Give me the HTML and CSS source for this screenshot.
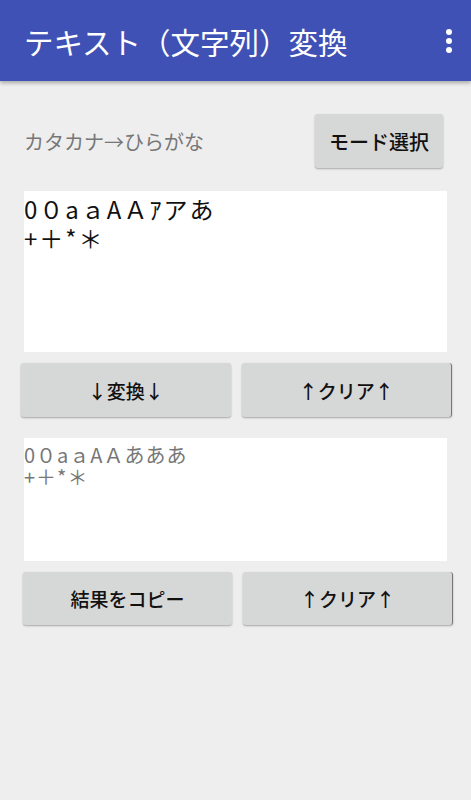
FILE: index.html
```html
<!DOCTYPE html>
<html lang="ja">
<head>
  <meta charset="UTF-8" />
  <meta name="viewport" content="width=device-width, initial-scale=1.0"/>
  <title>テキスト（文字列）変換</title>
  <link rel="stylesheet" href="styles.css">
</head>
<body>
  <header class="appbar">
    <h1>テキスト（文字列）変換</h1>
    <button class="menu-btn" aria-label="メニュー">
      <svg width="8" height="26" viewBox="0 0 8 26">
        <circle cx="4" cy="4" r="3" fill="#fff"/>
        <circle cx="4" cy="13" r="3" fill="#fff"/>
        <circle cx="4" cy="22" r="3" fill="#fff"/>
      </svg>
    </button>
  </header>

  <main class="content">
    <div class="mode-row">
      <span class="mode-label">カタカナ→ひらがな</span>
      <button class="btn btn-mode">モード選択</button>
    </div>

    <textarea class="textbox input-box" id="inputText">0０aａAＡｱアあ
+＋*＊</textarea>

    <div class="btn-row first">
      <button class="btn">↓変換↓</button>
      <button class="btn btn-edge">↑クリア↑</button>
    </div>

    <div class="textbox output-box" id="outputText">0０aａAＡあああ
+＋*＊</div>

    <div class="btn-row second">
      <button class="btn">結果をコピー</button>
      <button class="btn btn-edge">↑クリア↑</button>
    </div>
  </main>
</body>
</html>
```

FILE: styles.css
```css
body {
  font-family: "Noto Sans CJK JP", "Noto Sans", sans-serif;
  margin: 0;
  padding: 0;
  background-color: #eeeeee;
  color: #000;
  min-height: 800px;
}

.appbar {
  height: 81px;
  background-color: #3f51b5;
  color: #fff;
  display: flex;
  align-items: center;
  justify-content: space-between;
  padding: 0 24px;
  box-shadow: 0 2px 4px rgba(0,0,0,0.3);
}

.appbar h1 {
  margin: 0;
  font-size: 29.5px;
  font-weight: normal;
}

.menu-btn {
  background: none;
  border: none;
  padding: 0;
  margin-right: -6px;
  display: flex;
}

.content {
  padding: 33px 24px 0;
}

.mode-row {
  display: flex;
  align-items: center;
  justify-content: space-between;
  padding-right: 4px;
}

.mode-label {
  font-size: 20px;
  color: #777;
}

.btn {
  font-family: "Noto Sans CJK JP", "Noto Sans", sans-serif;
  font-size: 19px;
  font-weight: 500;
  color: #111;
  background-color: #d6d7d7;
  border: none;
  border-radius: 3px;
  box-shadow: 0 1px 2px rgba(0,0,0,0.3);
  height: 54px;
  padding: 0;
}

.btn-mode {
  width: 128px;
  font-size: 20px;
}

.btn-edge {
  border-right: 1px solid #777;
}

.textbox {
  display: block;
  box-sizing: border-box;
  width: 100%;
  background: #fff;
  border: none;
  margin: 0;
  white-space: pre-line;
  font-family: "Noto Sans CJK JP", "Noto Sans", sans-serif;
}

.input-box {
  margin-top: 23px;
  height: 161px;
  padding: 3px 0;
  font-size: 24px;
  line-height: 29px;
  letter-spacing: 2px;
  color: #111;
  resize: none;
  outline: none;
  overflow: hidden;
}

.output-box {
  margin-top: 21px;
  height: 123px;
  padding: 6px 0;
  font-size: 20px;
  line-height: 22px;
  letter-spacing: 1px;
  color: #777;
}

.btn-row {
  display: flex;
  gap: 11px;
  margin-top: 11px;
}

.btn-row .btn {
  flex: 1;
}

.btn-row.first {
  margin-left: -3px;
  margin-right: -5px;
}

.btn-row.second {
  margin-left: -1px;
  margin-right: -6px;
}

.btn-row.second .btn {
  height: 53px;
}
```
